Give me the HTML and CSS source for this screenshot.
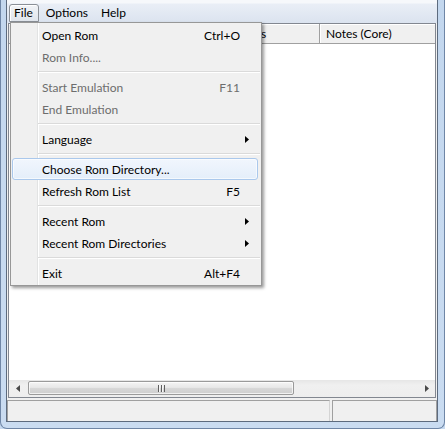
FILE: index.html
```html
<!DOCTYPE html>
<html>
<head>
<meta charset="utf-8">
<link rel="stylesheet" href="styles.css">
</head>
<body>
<div class="frame">
  <div class="client">
    <div class="menubar">
      <span class="mb-item open">File</span>
      <span class="mb-item">Options</span>
      <span class="mb-item">Help</span>
    </div>
    <div class="list">
      <div class="header">
        <div class="hcol c1"></div>
        <div class="hcol c2">s</div>
        <div class="hcol c3">Notes (Core)</div>
      </div>
      <div class="rows"></div>
      <div class="hscroll">
        <div class="sb-btn"><svg width="4" height="7" viewBox="0 0 4 7"><polygon points="4,0 0,3.5 4,7" fill="#4a4a4a"/></svg></div>
        <div class="track">
          <div class="thumb">
            <svg width="7" height="7" viewBox="0 0 7 7" class="grip">
              <rect x="0" y="0" width="1" height="7" fill="#5f5f5f"/>
              <rect x="1" y="0" width="1" height="7" fill="#f6f6f6"/>
              <rect x="3" y="0" width="1" height="7" fill="#5f5f5f"/>
              <rect x="4" y="0" width="1" height="7" fill="#f6f6f6"/>
              <rect x="6" y="0" width="1" height="7" fill="#5f5f5f"/>
            </svg>
          </div>
        </div>
        <div class="sb-btn"><svg width="4" height="7" viewBox="0 0 4 7"><polygon points="0,0 4,3.5 0,7" fill="#4a4a4a"/></svg></div>
      </div>
    </div>
    <div class="statusbar">
      <div class="pane p1"></div>
      <div class="pane p2"></div>
    </div>
  </div>

  <div class="popup">
    <div class="mi"><span class="lbl">Open Rom</span><span class="sc">Ctrl+O</span><span class="arr"></span></div>
    <div class="mi dis"><span class="lbl">Rom Info....</span><span class="sc"></span><span class="arr"></span></div>
    <div class="sep"></div>
    <div class="mi dis"><span class="lbl">Start Emulation</span><span class="sc">F11</span><span class="arr"></span></div>
    <div class="mi dis"><span class="lbl">End Emulation</span><span class="sc"></span><span class="arr"></span></div>
    <div class="sep"></div>
    <div class="mi"><span class="lbl">Language</span><span class="sc"></span><span class="arr"><svg width="4" height="7" viewBox="0 0 4 7"><polygon points="0,0 4,3.5 0,7" fill="#000"/></svg></span></div>
    <div class="sep"></div>
    <div class="mi hot"><span class="lbl">Choose Rom Directory...</span><span class="sc"></span><span class="arr"></span></div>
    <div class="mi"><span class="lbl">Refresh Rom List</span><span class="sc">F5</span><span class="arr"></span></div>
    <div class="sep"></div>
    <div class="mi"><span class="lbl">Recent Rom</span><span class="sc"></span><span class="arr"><svg width="4" height="7" viewBox="0 0 4 7"><polygon points="0,0 4,3.5 0,7" fill="#000"/></svg></span></div>
    <div class="mi"><span class="lbl">Recent Rom Directories</span><span class="sc"></span><span class="arr"><svg width="4" height="7" viewBox="0 0 4 7"><polygon points="0,0 4,3.5 0,7" fill="#000"/></svg></span></div>
    <div class="sep"></div>
    <div class="mi"><span class="lbl">Exit</span><span class="sc">Alt+F4</span><span class="arr"></span></div>
  </div>
</div>
</body>
</html>
```

FILE: styles.css
```css
html, body {
  margin: 0;
  padding: 0;
  background: #c6d9ef;
}
body {
  font-family: "Lato", "Noto Sans", sans-serif;
  font-size: 12px;
  color: #000;
}
.frame {
  position: relative;
  width: 445px;
  height: 429px;
  box-sizing: border-box;
  padding: 0 6px 6px 5px;
  border: 1px solid #6f86a6;
  border-top: none;
  border-radius: 0 0 7px 7px;
  background: linear-gradient(to bottom, #c3d7ee, #cadcf1);
}
.client {
  height: 422px;
  box-sizing: border-box;
  border: 1px solid #5d6b7e;
  border-top: none;
  background: #f0f0f0;
  display: flex;
  flex-direction: column;
}
.menubar {
  height: 23px;
  flex: none;
  display: flex;
  align-items: flex-start;
  gap: 2px;
  padding-left: 2px;
  background: linear-gradient(to bottom, #f6f8fb 0, #f6f8fb 3px, #e9eef6 4px, #dbe3ef 100%);
}
.mb-item {
  margin-top: 4px;
  height: 18px;
  box-sizing: border-box;
  line-height: 16px;
  padding: 0 5px 0 4px;
  border: 1px solid transparent;
}
.mb-item.open {
  border-color: #8a8f96;
  border-radius: 3px 3px 0 0;
  background: linear-gradient(to bottom, #f1f3f6, #e0e5ec);
  box-shadow: inset 1px 1px 0 #fff;
}
.list {
  flex: none;
  height: 375px;
  margin: 0 1px;
  border: 1px solid #828790;
  box-sizing: border-box;
  background: #fff;
  display: flex;
  flex-direction: column;
}
.header {
  height: 20px;
  flex: none;
  display: flex;
  box-sizing: border-box;
  background: #f0f0f0;
  border-bottom: 1px solid #a0a0a0;
  box-shadow: inset 0 1px 0 #fff;
}
.hcol {
  box-sizing: border-box;
  line-height: 19px;
  border-right: 1px solid #a0a0a0;
  box-shadow: 1px 0 0 #fff;
  white-space: nowrap;
  overflow: hidden;
}
.c1 { width: 250px; }
.c2 { width: 61px; padding-left: 2px; }
.c3 { flex: 1; padding-left: 6px; border-right: none; box-shadow: none; }
.rows { flex: 1; }
.hscroll {
  height: 17px;
  flex: none;
  display: flex;
  background: linear-gradient(to bottom, #e6e6e6, #f0f0f0 30%, #eeeeee);
}
.sb-btn {
  width: 17px;
  flex: none;
  display: flex;
  align-items: center;
  justify-content: center;
  padding-left: 1px;
  box-sizing: border-box;
}
.track {
  flex: 1;
  display: flex;
  align-items: stretch;
  padding: 1px 0 2px 2px;
}
.thumb {
  width: 266px;
  box-sizing: border-box;
  border: 1px solid #9a9a9a;
  border-radius: 2px;
  background: linear-gradient(to bottom, #f4f4f4 0, #e8e8e8 45%, #d6d6d6 55%, #cfcfcf 100%);
  box-shadow: inset 0 0 0 1px rgba(255,255,255,0.7);
  display: flex;
  align-items: center;
  justify-content: center;
}
.statusbar {
  flex: 1;
  display: flex;
  gap: 2px;
  padding-top: 2px;
}
.pane {
  box-sizing: border-box;
  border-top: 1px solid #a0a0a0;
}
.p1 {
  width: 323px;
  border-left: 1px solid #a0a0a0;
  border-right: 1px solid #d4d4d4;
}
.p2 {
  flex: 1;
  border-left: 1px solid #a0a0a0;
  border-right: 1px solid #a0a0a0;
}

/* popup menu */
.popup {
  position: absolute;
  left: 9px;
  top: 22px;
  width: 252px;
  box-sizing: border-box;
  border: 1px solid #979797;
  padding: 1px 3px 1px 1px;
  background: linear-gradient(to right, #f0f0f0 0, #f0f0f0 26px, #e2e3e3 26px, #e2e3e3 27px, #ffffff 27px, #ffffff 28px, #f0f0f0 28px);
  box-shadow: 2px 2px 3px rgba(0,0,0,0.4);
}
.mi {
  height: 22px;
  display: flex;
  align-items: center;
  box-sizing: border-box;
  border: 1px solid transparent;
  border-radius: 3px;
  white-space: nowrap;
}
.mi .lbl {
  flex: 1;
  padding-left: 29px;
}
.mi .sc {
  flex: none;
}
.mi .arr {
  width: 17px;
  flex: none;
  display: flex;
  align-items: center;
  padding-left: 5px;
  box-sizing: border-box;
}
.mi.dis { color: #6d6d6d; }
.mi.hot {
  border-color: #aac8ec;
  background: linear-gradient(to bottom, #f1f6fd, #e4eefa);
  box-shadow: inset 0 0 0 1px rgba(255,255,255,0.6);
}
.sep {
  height: 8px;
  margin-left: 26px;
  position: relative;
}
.sep::before {
  content: "";
  display: block;
  position: absolute;
  left: 0;
  right: -2px;
  top: 3px;
  height: 1px;
  background: #dadada;
  box-shadow: 0 1px 0 #fff;
}
```
